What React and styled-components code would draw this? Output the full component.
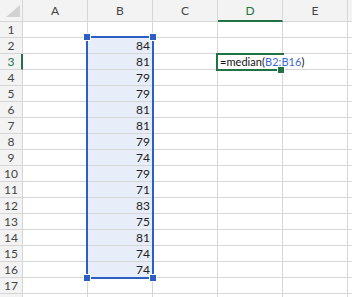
import React from 'react';
import styled, { createGlobalStyle } from 'styled-components';

const GlobalStyle = createGlobalStyle`
  html, body {
    margin: 0;
    padding: 0;
    background: #fff;
    overflow: hidden;
  }
`;

const GREEN = '#217346';
const BLUE = '#2b5fc4';
const LINE = '#d6d6d6';

const Sheet = styled.div`
  position: relative;
  display: grid;
  grid-template-columns: 23px repeat(6, 65px);
  grid-template-rows: 22px;
  grid-auto-rows: 16px;
  width: 352px;
  height: 297px;
  overflow: hidden;
  font-family: Lato, "Open Sans", sans-serif;
  font-size: 12px;
  color: #222;
`;

const Corner = styled.div`
  box-sizing: border-box;
  background: #f3f3f3;
  border-right: 1px solid ${LINE};
  border-bottom: 1px solid ${LINE};
  display: flex;
  align-items: flex-end;
  justify-content: flex-end;
  padding: 0 2px 4px 0;
`;

const ColHead = styled.div`
  box-sizing: border-box;
  background: #f3f3f3;
  border-right: 1px solid ${LINE};
  border-bottom: ${p => (p.$active ? `2px solid ${GREEN}` : `1px solid ${LINE}`)};
  color: ${p => (p.$active ? GREEN : '#444')};
  display: flex;
  align-items: center;
  justify-content: center;
  padding-top: ${p => (p.$active ? '1px' : '0')};
`;

const RowHead = styled.div`
  box-sizing: border-box;
  background: #f3f3f3;
  border-right: ${p => (p.$active ? `2px solid ${GREEN}` : `1px solid ${LINE}`)};
  border-bottom: 1px solid ${LINE};
  color: ${p => (p.$active ? GREEN : '#444')};
  text-align: center;
  line-height: 15px;
  padding-left: ${p => (p.$active ? '1px' : '0')};
`;

const Cell = styled.div`
  position: relative;
  box-sizing: border-box;
  border-right: 1px solid ${LINE};
  border-bottom: 1px solid ${LINE};
  background: ${p => (p.$selected ? '#e8eef9' : '#fff')};
  text-align: right;
  line-height: 15px;
  padding-right: 2px;
  white-space: nowrap;
  overflow: visible;
  z-index: ${p => (p.$editing ? 2 : 0)};
`;

// text typed into D3 spills over E3, covering its grid line
const Formula = styled.span`
  position: absolute;
  left: 1px;
  top: 0;
  padding: 0 1px;
  background: #fff;
  color: #111;
  font-size: 11px;
  letter-spacing: 0.05px;
`;

const Ref = styled.span`
  color: #3a6bd6;
`;

const SelectionBox = styled.div`
  position: absolute;
  left: 86px;
  top: 36px;
  width: 68px;
  height: 243px;
  box-sizing: border-box;
  border: 2px solid ${BLUE};
  pointer-events: none;
  z-index: 3;
`;

const ActiveBox = styled.div`
  position: absolute;
  left: 216px;
  top: 53px;
  width: 68px;
  height: 18px;
  box-sizing: border-box;
  border: 2px solid ${GREEN};
  border-right: none;
  pointer-events: none;
  z-index: 3;
`;

const Handle = styled.div`
  position: absolute;
  width: 6px;
  height: 6px;
  box-sizing: border-box;
  background: ${p => p.$color};
  outline: 1px solid #fff;
  ${p => (p.$top ? 'top: -4px;' : 'bottom: -4px;')}
  ${p => (p.$left ? 'left: -4px;' : `right: ${p.$inset ? '0' : '-4px'};`)}
`;

const columns = ['A', 'B', 'C', 'D', 'E', ''];
const values = [84, 81, 79, 79, 81, 81, 79, 74, 79, 71, 83, 75, 81, 74, 74];
const rows = Array.from({ length: 18 }, (_, i) => i + 1);

const App = () => {
  return (
    <React.Fragment>
      <GlobalStyle />
      <Sheet>
        <Corner>
          <svg width="14" height="12" viewBox="0 0 14 12">
            <polygon points="14,0 14,12 0,12" fill="#d2d2d2" />
          </svg>
        </Corner>
        {columns.map((c, i) => (
          <ColHead key={'h' + i} $active={c === 'D'}>{c}</ColHead>
        ))}

        {rows.map(r => (
          <React.Fragment key={r}>
            <RowHead $active={r === 3}>{r < 18 ? r : ''}</RowHead>
            {columns.map((c, i) => {
              const inB = c === 'B' && r >= 2 && r <= 16;
              const editing = c === 'D' && r === 3;
              return (
                <Cell key={c + i} $selected={inB} $editing={editing}>
                  {inB ? values[r - 2] : null}
                  {editing ? (
                    <Formula>
                      =median(<Ref>B2:B16</Ref>)
                    </Formula>
                  ) : null}
                </Cell>
              );
            })}
          </React.Fragment>
        ))}

        <SelectionBox>
          <Handle $color={BLUE} $top $left />
          <Handle $color={BLUE} $top />
          <Handle $color={BLUE} $left />
          <Handle $color={BLUE} />
        </SelectionBox>

        <ActiveBox>
          <Handle $color={GREEN} $inset />
        </ActiveBox>
      </Sheet>
    </React.Fragment>
  );
};

export default App;
